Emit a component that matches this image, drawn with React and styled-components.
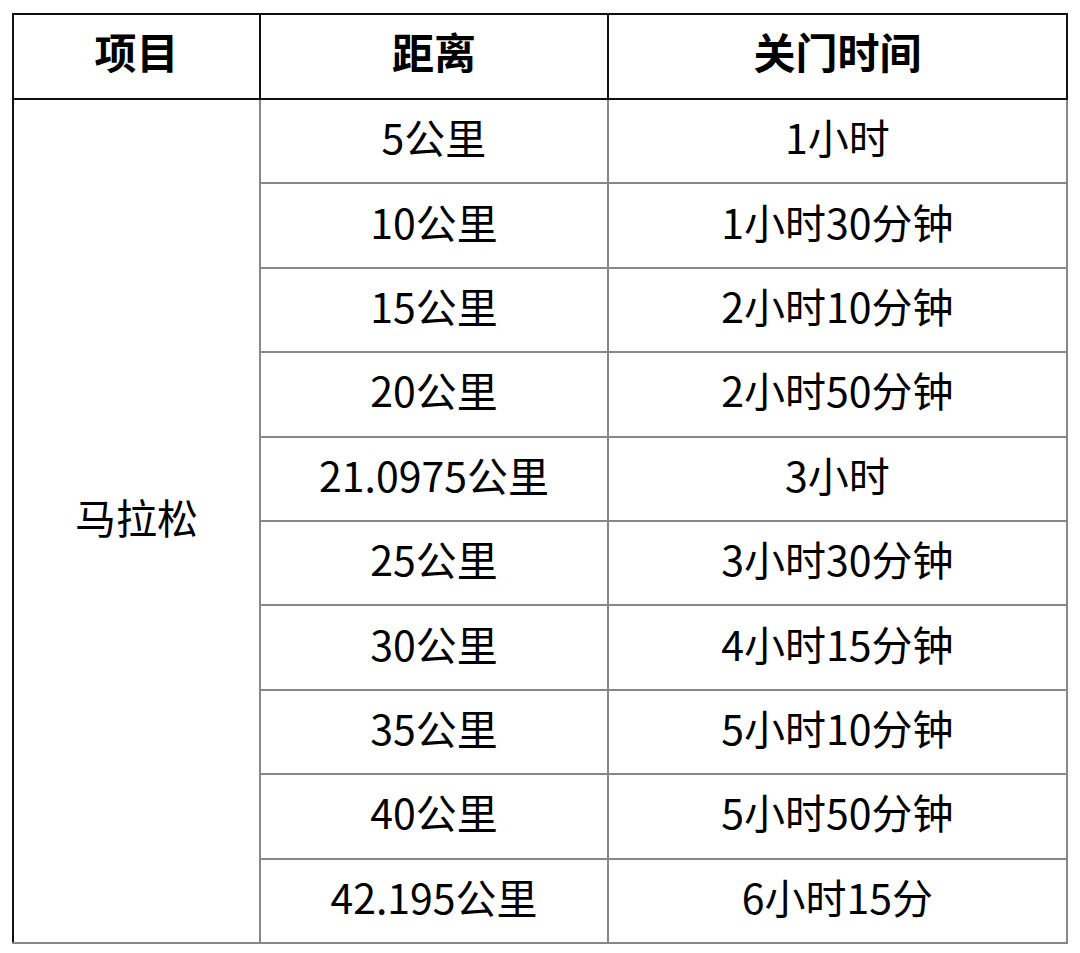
import styled, { createGlobalStyle } from 'styled-components';

const GlobalStyle = createGlobalStyle`
  body {
    margin: 0;
    background: #fff;
    font-family: "Noto Sans CJK SC", "Noto Sans", sans-serif;
    color: #000;
  }
  td, th {
    box-sizing: border-box;
  }
`;

const rows = [
  ['5公里', '1小时'],
  ['10公里', '1小时30分钟'],
  ['15公里', '2小时10分钟'],
  ['20公里', '2小时50分钟'],
  ['21.0975公里', '3小时'],
  ['25公里', '3小时30分钟'],
  ['30公里', '4小时15分钟'],
  ['35公里', '5小时10分钟'],
  ['40公里', '5小时50分钟'],
  ['42.195公里', '6小时15分'],
];

export default function App() {
  return (
    <Page>
      <GlobalStyle />
      <Table>
        <colgroup>
          <col style={{ width: 247 }} />
          <col style={{ width: 348 }} />
          <col style={{ width: 459 }} />
        </colgroup>
        <thead>
          <HeadRow>
            <Head>项目</Head>
            <Head>距离</Head>
            <Head>关门时间</Head>
          </HeadRow>
        </thead>
        <tbody>
          {rows.map(([dist, time], i) => (
            <Row key={dist}>
              {i === 0 && <Event rowSpan={rows.length}>马拉松</Event>}
              <Cell>{dist}</Cell>
              <Cell>{time}</Cell>
            </Row>
          ))}
        </tbody>
      </Table>
    </Page>
  );
}

const Page = styled.div`
  padding: 13px 0 0 12px;
`;

const Table = styled.table`
  border-collapse: collapse;
  table-layout: fixed;
  width: 1055px;
`;

const HeadRow = styled.tr`
  height: 85px;
`;

const Row = styled.tr`
  height: 84.4px;
`;

const Head = styled.th`
  padding: 0 0 12px;
  font-size: 42px;
  font-weight: 700;
  text-align: center;
  border: 2px solid #111;
  line-height: 1;
`;

const Event = styled.td`
  padding: 0 0 8px;
  font-size: 41px;
  text-align: center;
  border-left: 2px solid #111;
  border-bottom: 2px solid #888;
  border-right: 2px solid #888;
  line-height: 1;
`;

const Cell = styled.td`
  padding: 0 0 9px;
  font-size: 41px;
  text-align: center;
  border: 2px solid #888;
  line-height: 1;
`;
